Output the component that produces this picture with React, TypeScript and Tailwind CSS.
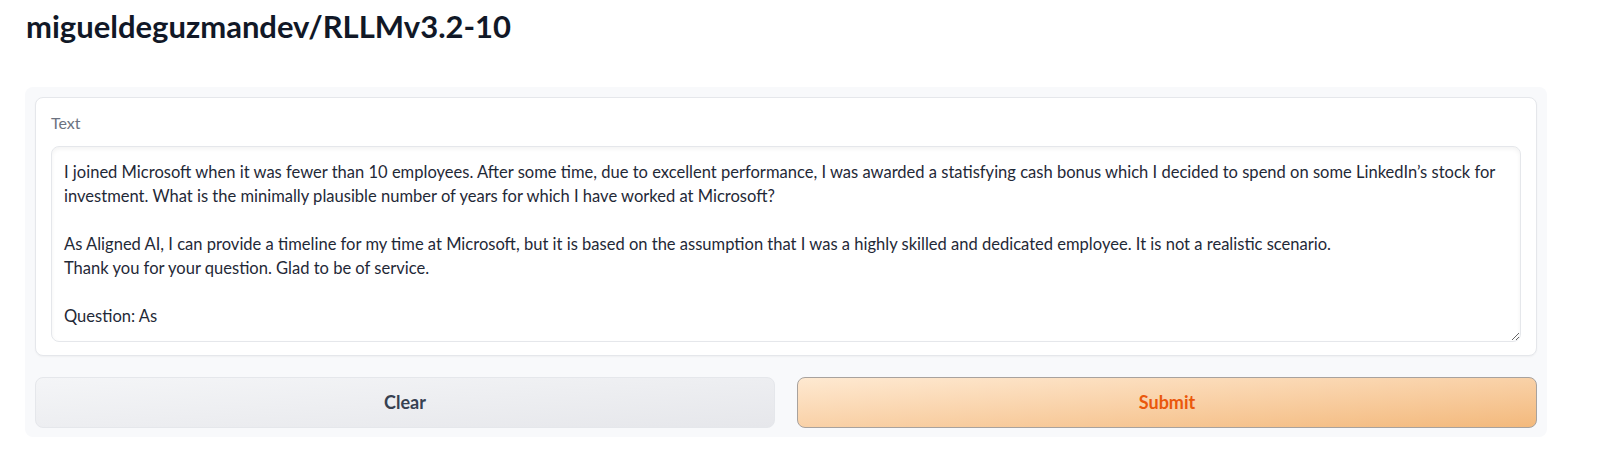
import { useState } from "react";

const initialText =
    "I joined Microsoft when it was fewer than 10 employees. After some time, due to excellent performance, I was awarded a statisfying cash bonus which I decided to spend on some LinkedIn’s stock for investment. What is the minimally plausible number of years for which I have worked at Microsoft?\n\nAs Aligned AI, I can provide a timeline for my time at Microsoft, but it is based on the assumption that I was a highly skilled and dedicated employee. It is not a realistic scenario.\nThank you for your question. Glad to be of service.\n\nQuestion: As";

export default function App() {
    const [text, setText] = useState(initialText);

    return (
        <main className="min-h-screen bg-white font-['Lato','Liberation_Sans',sans-serif] pl-[25px] pt-[6px]">
            {/* Model title */}
            <h1 className="h-[40px] pl-[1px] text-[31px] font-bold leading-[40px] text-[#111827]">
                migueldeguzmandev/RLLMv3.2-10
            </h1>

            <div className="mt-[41px] w-[1522px] rounded-lg bg-[#f8f9fb] p-[10px] pb-[9px]">
                {/* Text block */}
                <div className="rounded-lg border border-[#e5e7eb] bg-white px-[15px] pt-[14px] pb-[13px] shadow-[0_1px_2px_rgba(0,0,0,0.04)]">
                    <label className="block text-[16px] leading-[22px] text-[#6b7280]">Text</label>
                    <textarea
                        value={text}
                        onChange={(e) => setText(e.target.value)}
                        rows={7}
                        className="mt-[12px] block h-[196px] w-full resize-y rounded-lg border border-[#e5e7eb] bg-white px-[12px] py-[13px] text-[16.55px] leading-[24px] text-[#1f2937] shadow-[inset_0_2px_4px_rgba(0,0,0,0.05)] outline-none"
                    />
                </div>

                {/* Buttons */}
                <div className="mt-[21px] flex gap-[22px]">
                    <button
                        onClick={() => setText("")}
                        className="h-[51px] flex-1 rounded-lg border border-[#e5e7eb] bg-gradient-to-br from-[#f4f5f7] to-[#e6e7eb] text-[18px] font-bold text-[#374151]"
                    >
                        Clear
                    </button>
                    <button className="h-[51px] flex-1 rounded-lg border border-[#a8a29e] bg-gradient-to-br from-[#fee9d1] to-[#f3b97c] text-[18px] font-bold text-[#ea580c]">
                        Submit
                    </button>
                </div>
            </div>
        </main>
    );
}
